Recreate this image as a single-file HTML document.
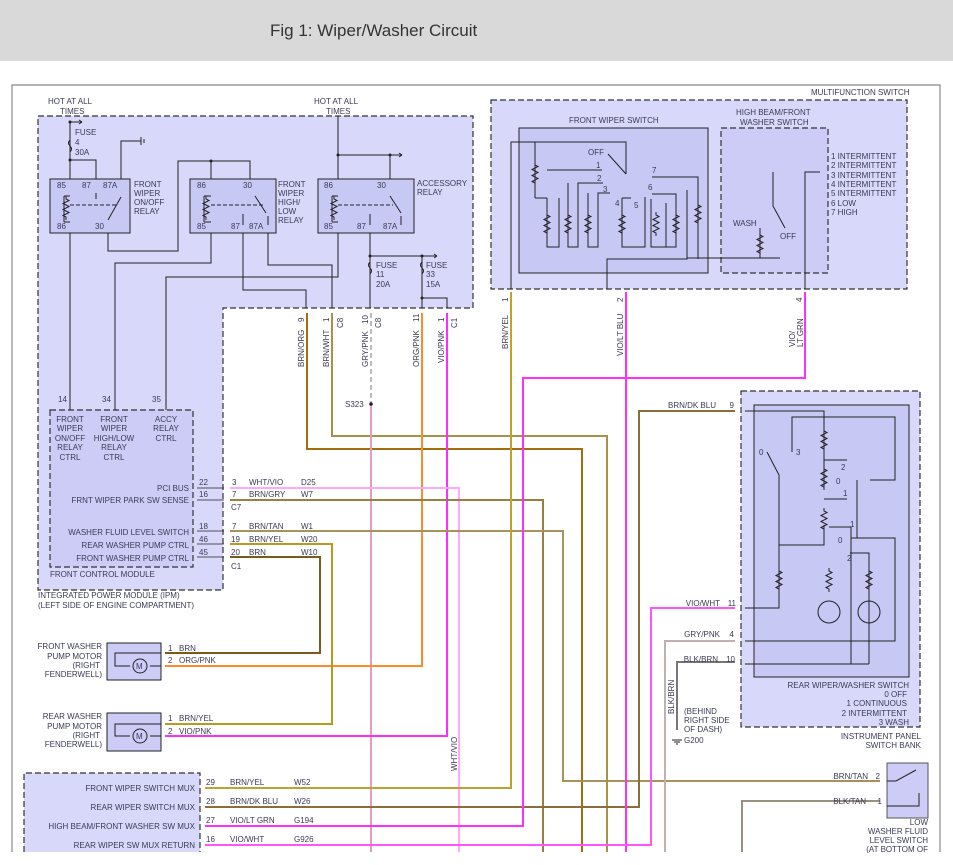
<!DOCTYPE html>
<html><head><meta charset="utf-8"><style>
html,body{margin:0;padding:0;background:#fff;}
body{width:953px;height:865px;overflow:hidden;position:relative;font-family:"Liberation Sans",sans-serif;}
.hdr{position:absolute;left:0;top:0;width:953px;height:61px;background:#d9d9d9;}
.hdr span{position:absolute;left:270px;top:21px;font-size:17px;color:#333;}
svg{position:absolute;left:0;top:0;}
svg text{font-family:"Liberation Sans",sans-serif;font-size:8px;fill:#3a3a55;}
</style></head><body>
<div class="hdr"><span>Fig 1: Wiper/Washer Circuit</span></div>
<svg width="953" height="865" viewBox="0 0 953 865">
<defs>
<g id="res"><path d="M0,0 l0,3 l3,1.5 l-6,3 l6,3 l-6,3 l6,3 l-6,3 l3,1.5 l0,3" fill="none" stroke="#222" stroke-width="1"/></g>
</defs>
<!-- outer frame -->
<path d="M12,852 V85 H940 V852" fill="none" stroke="#888" stroke-width="1.2"/>
<!-- IPM -->
<path d="M38,116 H473 V308 H223 V590 H38 Z" fill="#d8d8fa" stroke="#333" stroke-width="1.2" stroke-dasharray="6,3"/>
<rect x="50" y="410" width="143" height="157" fill="#ccccf7" stroke="#333" stroke-width="1.2" stroke-dasharray="6,3"/>
<!-- relays -->
<rect x="50" y="179" width="80" height="54" fill="#c8c8f5" stroke="#222"/>
<rect x="190" y="179" width="86" height="54" fill="#c8c8f5" stroke="#222"/>
<rect x="318" y="179" width="96" height="54" fill="#c8c8f5" stroke="#222"/>
<g fill="none" stroke="#222" stroke-width="1">
<path d="M70,122 V179 M70,160 H96 V179 M121,179 V141 H141 M70,122 H82"/>
<path d="M70,233 V410 M108,233 V251 H178 V161 H250 V179 M211,161 V179 M211,233 V263 H115 V410 M243,233 V290 H306 V308 M268,233 V265 H332 V308 M338,116 V179 M338,155 H402 M390,155 V179 M338,233 V277 H166 V410 M370,233 V308 M370,256 H437 M422,256 V308 M422,298 H447 V308"/>
<use href="#res" x="66" y="196"/><use href="#res" x="206" y="196"/><use href="#res" x="334" y="196"/>
<path d="M64,196 V222 M64,196 H70 M64,222 H70 M204,196 V222 M204,196 H211 M204,222 H211 M332,196 V222 M332,196 H338 M332,222 H338"/>
<path d="M70,205 H116 M211,205 H265 M338,205 H393" stroke-dasharray="4,2"/>
<path d="M121,197 L108,220 M255,196 L266,213 M390,196 L401,213 M96,199 V193 M243,214 V225 M370,214 V225 M268,216 V225 M401,216 V225"/>
<path d="M70,140 q-3,3 0,6 q3,3 0,6 M370,262 q-3,3 0,6 q3,3 0,6 M422,262 q-3,3 0,6 q3,3 0,6"/>
<path d="M82,122 l-3,-2 M82,122 l-3,2 M402,155 l-3,-2 M402,155 l-3,2 M437,256 l-3,-2 M437,256 l-3,2"/>
<path d="M141,137 V145 M144,139 V143"/>
</g>
<g fill="#222"><circle cx="70" cy="122" r="1.5"/><circle cx="70" cy="160" r="1.5"/><circle cx="211" cy="161" r="1.5"/><circle cx="338" cy="155" r="1.5"/><circle cx="390" cy="155" r="1.5"/><circle cx="370" cy="256" r="1.5"/><circle cx="422" cy="256" r="1.5"/><circle cx="422" cy="298" r="1.5"/></g>
<text x="48" y="104">HOT AT ALL</text><text x="60" y="114">TIMES</text>
<text x="314" y="104">HOT AT ALL</text><text x="326" y="114">TIMES</text>
<text x="75" y="135">FUSE</text><text x="75" y="145">4</text><text x="75" y="155">30A</text>
<text x="57" y="188">85</text><text x="82" y="188">87</text><text x="103" y="188">87A</text><text x="57" y="229">86</text><text x="95" y="229">30</text>
<text x="134" y="187">FRONT</text><text x="134" y="196">WIPER</text><text x="134" y="205">ON/OFF</text><text x="134" y="214">RELAY</text>
<text x="197" y="188">86</text><text x="243" y="188">30</text><text x="197" y="229">85</text><text x="231" y="229">87</text><text x="249" y="229">87A</text>
<text x="278" y="187">FRONT</text><text x="278" y="196">WIPER</text><text x="278" y="205">HIGH/</text><text x="278" y="214">LOW</text><text x="278" y="223">RELAY</text>
<text x="324" y="188">86</text><text x="377" y="188">30</text><text x="324" y="229">85</text><text x="357" y="229">87</text><text x="383" y="229">87A</text>
<text x="417" y="186">ACCESSORY</text><text x="417" y="195">RELAY</text>
<text x="376" y="268">FUSE</text><text x="376" y="277">11</text><text x="376" y="287">20A</text>
<text x="426" y="268">FUSE</text><text x="426" y="277">33</text><text x="426" y="287">15A</text>
<text x="58" y="402">14</text><text x="102" y="402">34</text><text x="152" y="402">35</text>
<g text-anchor="middle"><text x="70" y="422">FRONT</text><text x="70" y="431">WIPER</text><text x="70" y="441">ON/OFF</text><text x="70" y="450">RELAY</text><text x="70" y="460">CTRL</text>
<text x="114" y="422">FRONT</text><text x="114" y="431">WIPER</text><text x="114" y="441">HIGH/LOW</text><text x="114" y="450">RELAY</text><text x="114" y="460">CTRL</text>
<text x="166" y="422">ACCY</text><text x="166" y="431">RELAY</text><text x="166" y="441">CTRL</text></g>
<g text-anchor="end"><text x="189" y="491">PCI BUS</text><text x="189" y="503">FRNT WIPER PARK SW SENSE</text><text x="189" y="535">WASHER FLUID LEVEL SWITCH</text><text x="189" y="548">REAR WASHER PUMP CTRL</text><text x="189" y="561">FRONT WASHER PUMP CTRL</text></g>
<text x="50" y="577">FRONT CONTROL MODULE</text>
<text x="38" y="598">INTEGRATED POWER MODULE (IPM)</text><text x="38" y="608">(LEFT SIDE OF ENGINE COMPARTMENT)</text>
<g><text x="199" y="485">22</text><text x="199" y="497">16</text><text x="199" y="529">18</text><text x="199" y="542">46</text><text x="199" y="555">45</text>
<text x="232" y="485">3</text><text x="232" y="497">7</text><text x="231" y="510">C7</text><text x="232" y="529">7</text><text x="231" y="542">19</text><text x="231" y="555">20</text><text x="231" y="569">C1</text>
<text x="249" y="485">WHT/VIO</text><text x="249" y="497">BRN/GRY</text><text x="249" y="529">BRN/TAN</text><text x="249" y="542">BRN/YEL</text><text x="249" y="555">BRN</text>
<text x="301" y="485">D25</text><text x="301" y="497">W7</text><text x="301" y="529">W1</text><text x="301" y="542">W20</text><text x="301" y="555">W10</text></g>
<g stroke="#222" fill="none" stroke-width="0.8"><path d="M197,488 H224 M197,500 H224 M197,531 H224 M197,544 H224 M197,557 H224"/></g>
<!-- wires -->
<g fill="none" stroke-width="2">
<path d="M307,313 V449 H582 V852" stroke="#a06d10"/>
<path d="M332,313 V436 H607 V852" stroke="#a8924a"/>
<path d="M371,313 V404" stroke="#bbb" stroke-dasharray="5,3"/>
<path d="M371,404 V852" stroke="#dda0c0"/>
<path d="M422,313 V666 H165" stroke="#ff8a2a"/>
<path d="M447,313 V736 H165" stroke="#ff2bff"/>
<path d="M230,488 H459 V852" stroke="#ffa8ff"/>
<path d="M230,500 H543 V852" stroke="#9a8040"/>
<path d="M230,531 H563 V781 H880" stroke="#a8925a"/>
<path d="M230,544 H332 V724 H165" stroke="#b89a20"/>
<path d="M230,557 H320 V653 H165" stroke="#7a5a18"/>
<path d="M511,292 V788 H205" stroke="#c0a030"/>
<path d="M735,411 H639 V807 H205" stroke="#8a7038"/>
<path d="M626,292 V852" stroke="#ff30ff"/>
<path d="M805,292 V378 H523 V826 H205" stroke="#ff30ff"/>
<path d="M735,608 H651 V845 H205" stroke="#ff55ff"/>
<path d="M735,641 H665 V852" stroke="#c0b0b0"/>
<path d="M735,662 H677 V730" stroke="#777"/>
<path d="M880,801 H742 V852" stroke="#9a9080"/>
</g>
<circle cx="371" cy="404" r="1.8" fill="#222"/>
<text x="345" y="407">S323</text>
<g font-size="8">
<text transform="translate(304,367) rotate(-90)">BRN/ORG</text><text transform="translate(304,322) rotate(-90)">9</text>
<text transform="translate(329,367) rotate(-90)">BRN/WHT</text><text transform="translate(329,322) rotate(-90)">1</text><text transform="translate(343,328) rotate(-90)">C8</text>
<text transform="translate(368,367) rotate(-90)">GRY/PNK</text><text transform="translate(368,324) rotate(-90)">10</text><text transform="translate(381,328) rotate(-90)">C8</text>
<text transform="translate(419,367) rotate(-90)">ORG/PNK</text><text transform="translate(419,322) rotate(-90)">11</text>
<text transform="translate(444,363) rotate(-90)">VIO/PNK</text><text transform="translate(444,322) rotate(-90)">1</text><text transform="translate(457,328) rotate(-90)">C1</text>
<text transform="translate(508,349) rotate(-90)">BRN/YEL</text><text transform="translate(508,302) rotate(-90)">1</text>
<text transform="translate(623,356) rotate(-90)">VIO/LT BLU</text><text transform="translate(623,302) rotate(-90)">2</text>
<text transform="translate(795,347) rotate(-90)">VIO/</text><text transform="translate(803,347) rotate(-90)">LT GRN</text><text transform="translate(802,302) rotate(-90)">4</text>
<text transform="translate(457,771) rotate(-90)">WHT/VIO</text>
<text transform="translate(674,714) rotate(-90)">BLK/BRN</text>
</g>
<!-- multifunction -->
<rect x="491" y="100" width="416" height="189" fill="#d8d8fa" stroke="#333" stroke-width="1.2" stroke-dasharray="6,3"/>
<rect x="519" y="128" width="189" height="145" fill="#c8c8f5" stroke="#222"/>
<rect x="721" y="128" width="107" height="145" fill="#ccccf7" stroke="#333" stroke-width="1.2" stroke-dasharray="6,3"/>
<text x="811" y="95">MULTIFUNCTION SWITCH</text>
<text x="569" y="123">FRONT WIPER SWITCH</text>
<text x="736" y="115">HIGH BEAM/FRONT</text><text x="740" y="125">WASHER SWITCH</text>
<g fill="none" stroke="#222" stroke-width="1">
<path d="M511,289 V142 H626 V174 M535,142 V198 M535,198 H547 M547,198 V247 H559 V198 M559,198 V247 M547,170 H602 M568,183 V247 H578 V183 H603 M588,193 V247 H598 V193 H610 M622,198 V247 H645 V197 M622,198 H631 M651,199 V247 H666 V203 M666,203 V247 H676 V204 M652,194 H676 V247 M687,190 V259 H607 V289 M652,177 H698 V196 M698,190 V259 M687,258 H780 M805,289 V172 H820 M773,172 V206 L785,228 M760,228 V258 M608,154 L626,174"/>
<use href="#res" x="535" y="162"/><use href="#res" x="547" y="212"/><use href="#res" x="568" y="212"/><use href="#res" x="588" y="212"/><use href="#res" x="622" y="212"/><use href="#res" x="656" y="212"/><use href="#res" x="676" y="212"/><use href="#res" x="698" y="202"/><use href="#res" x="760" y="232"/>
</g>
<text x="588" y="155">OFF</text><text x="596" y="168">1</text><text x="597" y="181">2</text><text x="603" y="192">3</text><text x="615" y="206">4</text><text x="634" y="208">5</text><text x="648" y="190">6</text><text x="652" y="173">7</text>
<text x="733" y="226">WASH</text><text x="780" y="239">OFF</text>
<g><text x="831" y="159">1 INTERMITTENT</text><text x="831" y="168">2 INTERMITTENT</text><text x="831" y="178">3 INTERMITTENT</text><text x="831" y="187">4 INTERMITTENT</text><text x="831" y="196">5 INTERMITTENT</text><text x="831" y="206">6 LOW</text><text x="831" y="215">7 HIGH</text></g>
<!-- instrument panel switch bank -->
<rect x="741" y="391" width="179" height="336" fill="#d8d8fa" stroke="#333" stroke-width="1.2" stroke-dasharray="6,3"/>
<rect x="754" y="405" width="155" height="272" fill="#c8c8f5" stroke="#222"/>
<g fill="none" stroke="#222" stroke-width="1">
<path d="M745,411 H824 V487 M792,452 V417 H895 V480 H870 M824,460 H847 M824,499 H847 M824,542 V545 H779 V608 H745 M767,452 L779,475 V608 M824,525 V545 M851,532 V538 H895 V641 H745 M850,553 H869 V664 M829,527 H851 V664 M745,664 H869 M857,480 V538" />
<path d="M857,480 V538" stroke-dasharray="3,2"/>
<use href="#res" x="824" y="428"/><use href="#res" x="824" y="466"/><use href="#res" x="824" y="508"/><use href="#res" x="779" y="568"/><use href="#res" x="829" y="568"/><use href="#res" x="869" y="568"/>
<circle cx="829" cy="612" r="11"/><circle cx="869" cy="612" r="11"/>
</g>
<text x="759" y="455">0</text><text x="796" y="455">3</text><text x="841" y="470">2</text><text x="836" y="484">0</text><text x="843" y="496">1</text><text x="850" y="527">1</text><text x="838" y="543">0</text><text x="847" y="561">2</text>
<g text-anchor="end"><text x="909" y="688">REAR WIPER/WASHER SWITCH</text><text x="907" y="697">0 OFF</text><text x="907" y="706">1 CONTINUOUS</text><text x="907" y="716">2 INTERMITTENT</text><text x="909" y="725">3 WASH</text>
<text x="921" y="739">INSTRUMENT PANEL</text><text x="921" y="748">SWITCH BANK</text>
<text x="716" y="408">BRN/DK BLU</text><text x="734" y="408">9</text><text x="720" y="606">VIO/WHT</text><text x="736" y="606">11</text><text x="720" y="637">GRY/PNK</text><text x="734" y="637">4</text><text x="718" y="662">BLK/BRN</text><text x="735" y="662">10</text>
<text x="868" y="779">BRN/TAN</text><text x="880" y="779">2</text><text x="866" y="804">BLK/TAN</text><text x="882" y="804">1</text>
<text x="928" y="825">LOW</text><text x="928" y="834">WASHER FLUID</text><text x="928" y="843">LEVEL SWITCH</text><text x="928" y="852">(AT BOTTOM OF</text>
</g>
<text x="684" y="714">(BEHIND</text><text x="684" y="723">RIGHT SIDE</text><text x="684" y="732">OF DASH)</text><text x="684" y="743">G200</text>
<path d="M672,740 H682 M674,742 H680 M676,744 H678" stroke="#222"/>
<!-- low washer fluid switch -->
<rect x="887" y="763" width="41" height="55" fill="#ccccf7" stroke="#555"/>
<path d="M887,781 H896 L916,770 M887,806 H919 V793" fill="none" stroke="#222"/>
<!-- pump motors -->
<rect x="107" y="643" width="54" height="37" fill="#ccccf7" stroke="#222"/>
<rect x="107" y="713" width="54" height="38" fill="#ccccf7" stroke="#222"/>
<g fill="none" stroke="#222" stroke-width="1">
<path d="M161,653 H115 V666 H130 M150,666 H161 M161,724 H115 V736 H130 M150,736 H161"/>
<circle cx="140" cy="666" r="7"/><circle cx="140" cy="736" r="7"/>
</g>
<text x="136" y="669" font-size="9">M</text><text x="136" y="739" font-size="9">M</text>
<text x="168" y="651">1</text><text x="179" y="651">BRN</text><text x="168" y="663">2</text><text x="179" y="663">ORG/PNK</text>
<text x="168" y="721">1</text><text x="179" y="721">BRN/YEL</text><text x="168" y="734">2</text><text x="179" y="734">VIO/PNK</text>
<g text-anchor="end"><text x="102" y="649">FRONT WASHER</text><text x="102" y="659">PUMP MOTOR</text><text x="100" y="668">(RIGHT</text><text x="102" y="677">FENDERWELL)</text>
<text x="102" y="719">REAR WASHER</text><text x="102" y="729">PUMP MOTOR</text><text x="100" y="738">(RIGHT</text><text x="102" y="747">FENDERWELL)</text></g>
<!-- bottom module -->
<path d="M24,852 V773 H200 V852" fill="#d8d8fa" stroke="#333" stroke-width="1.2" stroke-dasharray="6,3"/>
<g text-anchor="end"><text x="195" y="791">FRONT WIPER SWITCH MUX</text><text x="195" y="810">REAR WIPER SWITCH MUX</text><text x="195" y="829">HIGH BEAM/FRONT WASHER SW MUX</text><text x="195" y="848">REAR WIPER SW MUX RETURN</text></g>
<text x="206" y="785">29</text><text x="206" y="804">28</text><text x="206" y="823">27</text><text x="206" y="842">16</text>
<text x="230" y="785">BRN/YEL</text><text x="230" y="804">BRN/DK BLU</text><text x="230" y="823">VIO/LT GRN</text><text x="230" y="842">VIO/WHT</text>
<text x="294" y="785">W52</text><text x="294" y="804">W26</text><text x="294" y="823">G194</text><text x="294" y="842">G926</text>
<rect x="0" y="853" width="953" height="12" fill="#fff"/>
</svg>
</body></html>
